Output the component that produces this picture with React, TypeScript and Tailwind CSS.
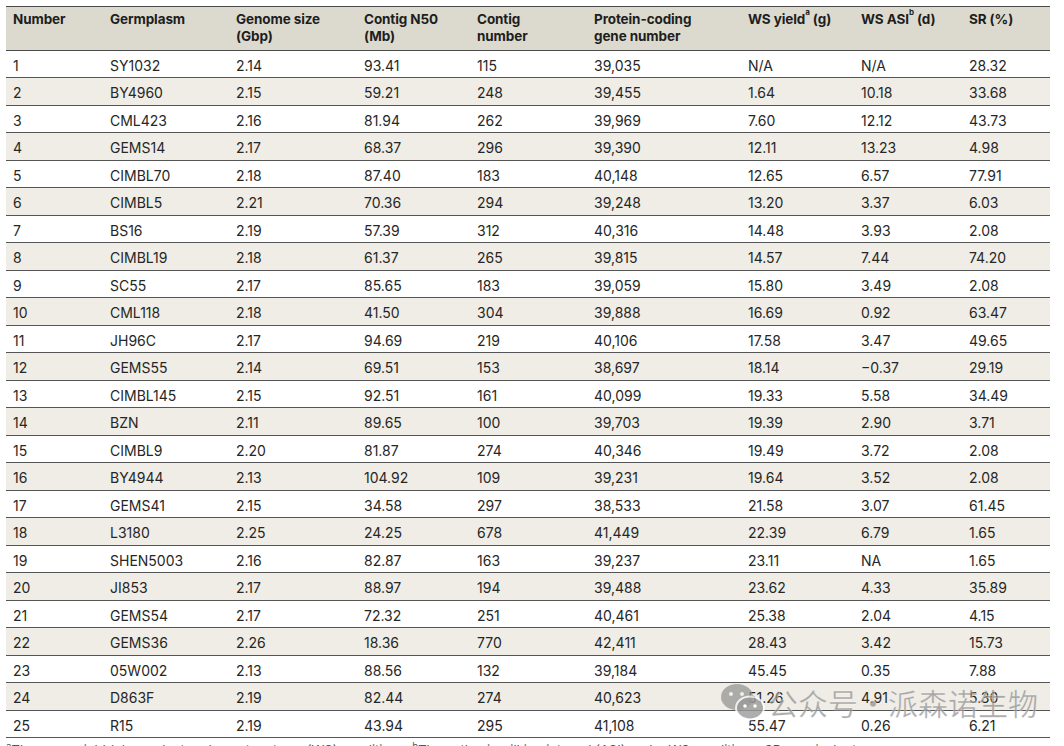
import React from "react";

const rows: string[][] = [
  ["1", "SY1032", "2.14", "93.41", "115", "39,035", "N/A", "N/A", "28.32"],
  ["2", "BY4960", "2.15", "59.21", "248", "39,455", "1.64", "10.18", "33.68"],
  ["3", "CML423", "2.16", "81.94", "262", "39,969", "7.60", "12.12", "43.73"],
  ["4", "GEMS14", "2.17", "68.37", "296", "39,390", "12.11", "13.23", "4.98"],
  ["5", "CIMBL70", "2.18", "87.40", "183", "40,148", "12.65", "6.57", "77.91"],
  ["6", "CIMBL5", "2.21", "70.36", "294", "39,248", "13.20", "3.37", "6.03"],
  ["7", "BS16", "2.19", "57.39", "312", "40,316", "14.48", "3.93", "2.08"],
  ["8", "CIMBL19", "2.18", "61.37", "265", "39,815", "14.57", "7.44", "74.20"],
  ["9", "SC55", "2.17", "85.65", "183", "39,059", "15.80", "3.49", "2.08"],
  ["10", "CML118", "2.18", "41.50", "304", "39,888", "16.69", "0.92", "63.47"],
  ["11", "JH96C", "2.17", "94.69", "219", "40,106", "17.58", "3.47", "49.65"],
  ["12", "GEMS55", "2.14", "69.51", "153", "38,697", "18.14", "\u22120.37", "29.19"],
  ["13", "CIMBL145", "2.15", "92.51", "161", "40,099", "19.33", "5.58", "34.49"],
  ["14", "BZN", "2.11", "89.65", "100", "39,703", "19.39", "2.90", "3.71"],
  ["15", "CIMBL9", "2.20", "81.87", "274", "40,346", "19.49", "3.72", "2.08"],
  ["16", "BY4944", "2.13", "104.92", "109", "39,231", "19.64", "3.52", "2.08"],
  ["17", "GEMS41", "2.15", "34.58", "297", "38,533", "21.58", "3.07", "61.45"],
  ["18", "L3180", "2.25", "24.25", "678", "41,449", "22.39", "6.79", "1.65"],
  ["19", "SHEN5003", "2.16", "82.87", "163", "39,237", "23.11", "NA", "1.65"],
  ["20", "JI853", "2.17", "88.97", "194", "39,488", "23.62", "4.33", "35.89"],
  ["21", "GEMS54", "2.17", "72.32", "251", "40,461", "25.38", "2.04", "4.15"],
  ["22", "GEMS36", "2.26", "18.36", "770", "42,411", "28.43", "3.42", "15.73"],
  ["23", "05W002", "2.13", "88.56", "132", "39,184", "45.45", "0.35", "7.88"],
  ["24", "D863F", "2.19", "82.44", "274", "40,623", "51.26", "4.91", "5.30"],
  ["25", "R15", "2.19", "43.94", "295", "41,108", "55.47", "0.26", "6.21"],
];

const widths = ["w-[97px]", "w-[126px]", "w-[128px]", "w-[113px]", "w-[117px]", "w-[154px]", "w-[113px]", "w-[108px]", "w-[88px]"];

function WeChatIcon() {
  return (
    <svg width="46" height="40" viewBox="0 0 46 40">
      <ellipse cx="17" cy="15" rx="16" ry="13" fill="#8e8e8e" opacity="0.7" />
      <circle cx="11" cy="12" r="2" fill="#fff" opacity="0.8" />
      <circle cx="22" cy="12" r="2" fill="#fff" opacity="0.8" />
      <ellipse cx="30" cy="26" rx="14" ry="11.5" fill="#9a9a9a" stroke="#fff" strokeWidth="2" opacity="0.8" />
      <circle cx="25" cy="24" r="1.8" fill="#fff" />
      <circle cx="35" cy="24" r="1.8" fill="#fff" />
    </svg>
  );
}

export default function App() {
  return (
    <div className="relative w-[1064px] h-[746px] overflow-hidden bg-white text-[#262626]" style={{ fontFamily: "Inter, 'Noto Sans', sans-serif" }}>
      <div className="pt-[6px] pl-[6px]">
        <div className="w-[1044px]">
          <div className="flex h-[45px] bg-[#dcdace] border-t border-b border-[#4a4a4a] text-[13.5px] font-bold leading-[17px] tracking-[-0.1px] text-[#1e1e1e]">
            <div className={`${widths[0]} pl-[7px] pt-[4px]`}>Number</div>
            <div className={`${widths[1]} pl-[7px] pt-[4px]`}>Germplasm</div>
            <div className={`${widths[2]} pl-[7px] pt-[4px]`}>Genome size<br />(Gbp)</div>
            <div className={`${widths[3]} pl-[7px] pt-[4px]`}>Contig N50<br />(Mb)</div>
            <div className={`${widths[4]} pl-[7px] pt-[4px]`}>Contig<br />number</div>
            <div className={`${widths[5]} pl-[7px] pt-[4px]`}>Protein-coding<br />gene number</div>
            <div className={`${widths[6]} pl-[7px] pt-[4px]`}>WS yield<sup className="text-[8px] align-[5px]">a</sup> (g)</div>
            <div className={`${widths[7]} pl-[7px] pt-[4px]`}>WS ASI<sup className="text-[8px] align-[5px]">b</sup> (d)</div>
            <div className={`${widths[8]} pl-[7px] pt-[4px]`}>SR (%)</div>
          </div>
          {rows.map((r, i) => (
            <div
              key={i}
              className={`flex items-center pt-[2px] border-b border-[#555] text-[14px] ${i % 2 === 1 ? "bg-[#efede5] h-[28px]" : "bg-white h-[27px]"}`}
            >
              {r.map((c, j) => (
                <div key={j} className={`${widths[j]} pl-[7px]`}>{c}</div>
              ))}
            </div>
          ))}
          <div className="pt-[4px] text-[13px] leading-[16px] text-[#555] whitespace-nowrap">
            <sup>a</sup>The mean yield (g) per plant under water stress (WS) conditions. <sup>b</sup>The anthesis–silking interval (ASI) under WS conditions. SR, survival rate.
          </div>
        </div>
      </div>
      <div className="absolute left-[720px] top-[682px] flex items-center gap-[2px] pointer-events-none whitespace-nowrap">
        <WeChatIcon />
        <span
          className="text-[30px] leading-[36px] text-[#8a8a8a]/70 whitespace-nowrap"
          style={{ fontFamily: "'Noto Sans CJK SC', sans-serif", WebkitTextStroke: "0.5px rgba(255,255,255,0.6)" }}
        >
          公众号·派森诺生物
        </span>
      </div>
    </div>
  );
}
